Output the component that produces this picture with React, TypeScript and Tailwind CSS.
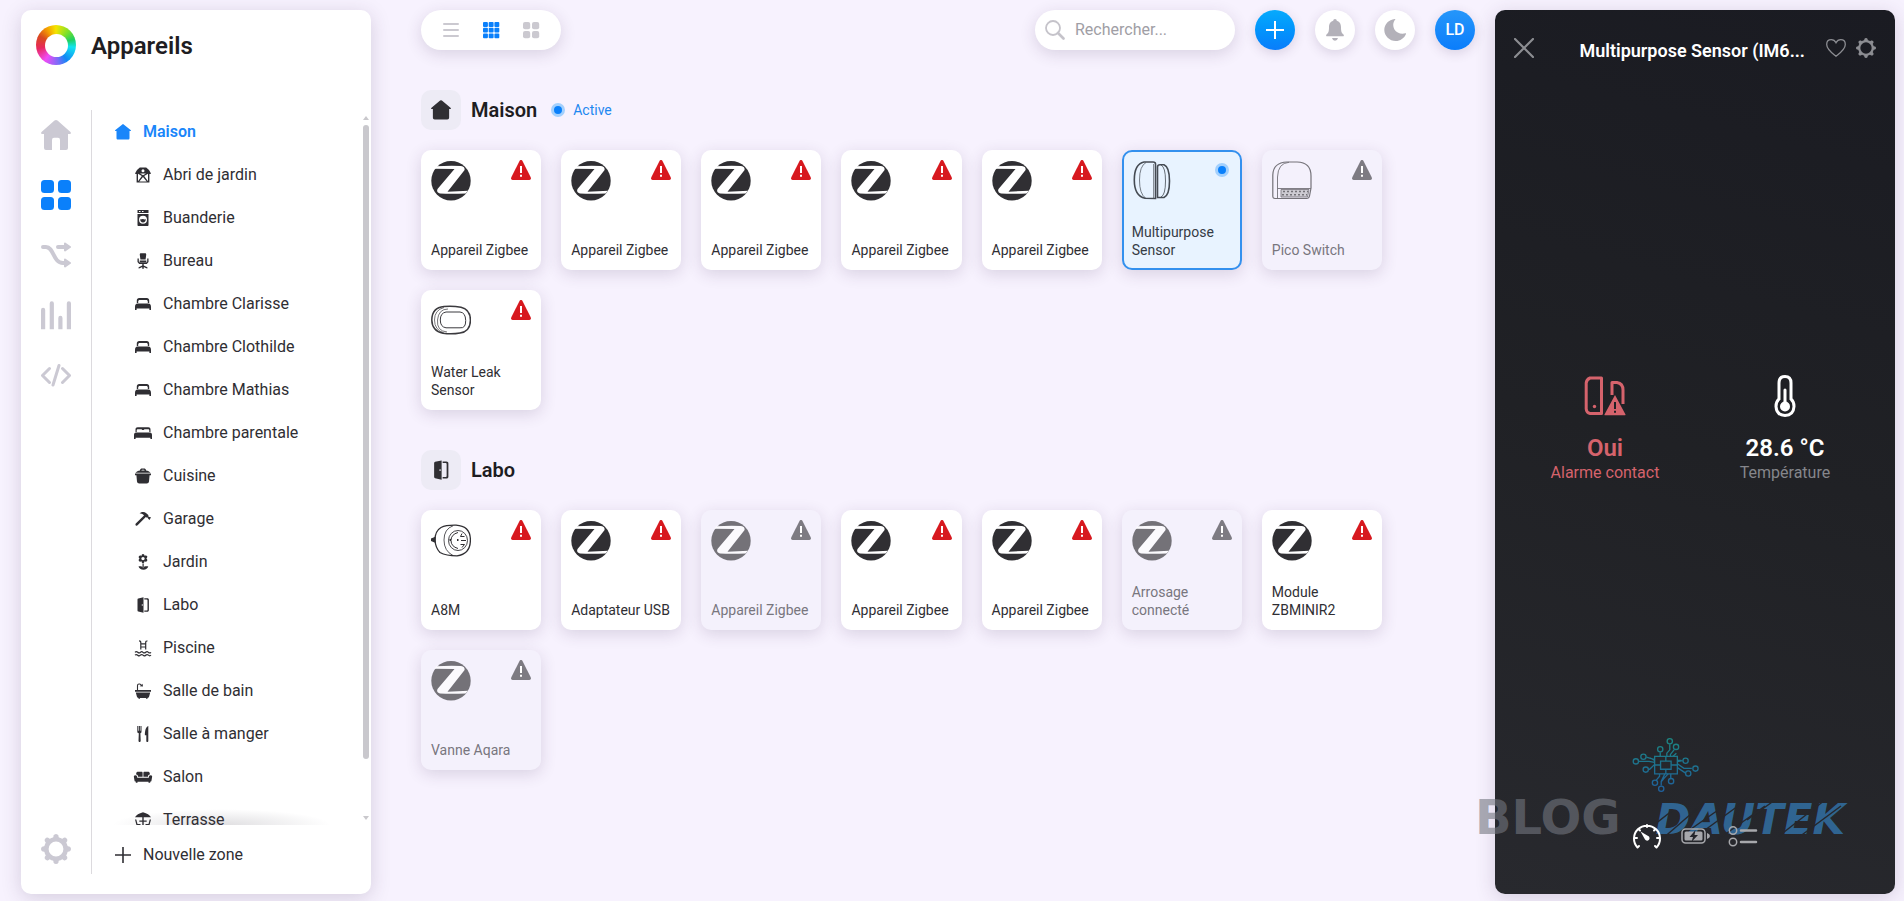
import { useState } from 'react';
import type { ReactNode } from 'react';

type DeviceKind = 'zigbee' | 'contact' | 'pico' | 'leak' | 'plug';

interface Device {
  id: string;
  name: string;
  kind: DeviceKind;
  disabled?: boolean;
  active?: boolean;
}

interface Zone {
  name: string;
  icon: ReactNode;
}

/* ---------- Zone icons (16 x 16) ---------- */

function Glyph({ children, className = 'size-4' }: { children: ReactNode; className?: string }) {
  return (
    <svg viewBox="0 0 16 16" className={`${className} shrink-0 overflow-visible`} fill="currentColor" aria-hidden="true">
      {children}
    </svg>
  );
}

const housePath = 'M7.3.4a1.1 1.1 0 0 1 1.4 0l6.9 5.7c.6.5.4 1-.3 1h-.8V14c0 1-.5 1.6-1.5 1.6H3c-1 0-1.500-.6-1.500-1.600V7.100H.7c-.7 0-.9-.5-.3-1z';
const doorPath = 'M8.500.3v15.400L3.300 14.600c-.5-.1-.8-.5-.8-1V2.400c0-.5.300-.9.8-1zM6.800 7.300v1.500h.9V7.300zM9.300 1.200h3c1 0 1.600.6 1.600 1.500v10.600c0 .9-.6 1.500-1.600 1.500h-3v-1.200h2.300c.6 0 .9-.3.9-.9V3.300c0-.6-.3-.9-.9-.9H9.300z';

const barn = (
  <Glyph>
    <path fillRule="evenodd" d="M4.800.5h6.400L14 3l2 3.400-.7.6H14.400V15.500H1.600V7H.7L0 6.400 2 3zM8 2.200a1.500 1.500 0 1 0 0 3 1.500 1.500 0 0 0 0-3zM3 6.800v7.400L6.800 9 3 6.800zm10 0L9.200 9 13 14.200zM5 6.600 8 8.300l3-1.700zM4.300 14.500h7.400L8 10z" />
  </Glyph>
);
const washer = (
  <Glyph>
    <path fillRule="evenodd" d="M2.500 0h11v3h-11zM4 1v1h1.500V1zm3 0v1h1.500V1zm-4.500 3h11v11c0 .6-.4 1-1 1h-9c-.6 0-1-.4-1-1zM8 5.700a4 4 0 1 0 0 8 4 4 0 0 0 0-8zM5.300 9c1 .8 1.800-.4 2.700 0s1.900.7 2.700 0c.3 2-1 3.600-2.700 3.600S5 11 5.300 9z" />
  </Glyph>
);
const chair = (
  <Glyph>
    <path d="M6 .3h4c.9 0 1.300.6 1.200 1.500l-.6 4.700H5.400L4.800 1.800C4.700.9 5.100.3 6 .3zM4.700 7.500h6.600v2H4.700zM2.500 5.500h1.300v3l1 1.300h6.400l1-1.300v-3h1.300V9l-1.700 2H8.700v1.500l3.700 1.700v1.200l-1.200-.2-2.400-1.100v1.600H7.200v-1.600l-2.400 1.100-1.200.2v-1.200l3.700-1.700V11H4.200L2.500 9z" />
  </Glyph>
);
const bed = (
  <Glyph>
    <path d="M1.800 7V4.500C1.800 3 2.700 2 4.200 2h7.600c1.500 0 2.400 1 2.400 2.500V7h-1.400V5.600c0-.9-.6-1.500-1.500-1.500H4.700c-.9 0-1.500.6-1.500 1.500V7zM2.500 7.500h11c1.700 0 2.500 1.500 2.500 3.500v3h-1.600v-1.500H1.600V14H0v-3c0-2 .8-3.500 2.500-3.500z" />
  </Glyph>
);
const doubleBed = (
  <Glyph>
    <path d="M.5 7V4.500C.5 3 1.300 2.200 2.700 2.200h10.600c1.400 0 2.200.8 2.200 2.300V7h-1.200V5.300c0-.7-.5-1.100-1.100-1.100H9.800c-.7 0-1 .3-1 .9H7.200c0-.6-.3-.9-1-.9H2.800c-.6 0-1.100.4-1.100 1.100V7zM1 7.500h14c1.300 0 2 1 2 2.500v4h-1.600v-1.300H.6V14H-1v-4c0-1.500.7-2.500 2-2.500z" />
  </Glyph>
);
const pot = (
  <Glyph>
    <path fillRule="evenodd" d="M5 2.500C5 1 6 .5 7 .5h2c1 0 2 .5 2 2 2 .2 3.500 1 4.500 2.300H.500C1.500 3.500 3 2.700 5 2.500zm1.400-.1h3.200c0-.4-.3-.7-.8-.7H7.200c-.5 0-.8.300-.8.700zM0 5.600h16V7.300h-1.400L14 13.500c-.2 1.300-1 2-2.300 2H4.300c-1.300 0-2.100-.7-2.300-2L1.400 7.300H0z" />
  </Glyph>
);
const hammer = (
  <Glyph>
    <path d="M4.600 2.500C6.500.8 9.300.6 11.300 2.200l2 1.900.2 1.600 1.100.4L16 6.300 14.500 9l-1.500-1.500-.3-1-1.300.1-.6-.6L2.600 14.300c-.5.6-1.300.6-1.800.1s-.5-1.300 0-1.800L9 4.500C8 3.100 6.500 2.500 4.600 2.500z" />
  </Glyph>
);
const flower = (
  <Glyph>
    <path fillRule="evenodd" d="M8 0c1 0 1.500.8 1.400 1.800 1-.6 2.200-.6 2.700.3s0 1.800-.8 2.400c.9.6 1.300 1.500.8 2.400S10.400 8 9.400 7.300C9.500 8.400 9 9.200 8 9.200s-1.500-.8-1.400-1.900C5.600 8 4.400 7.900 3.900 7s-.1-1.800.8-2.400c-.9-.6-1.300-1.500-.8-2.400s1.700-.9 2.700-.3C6.500.8 7 0 8 0zm0 2.900a1.700 1.700 0 1 0 0 3.400 1.700 1.700 0 0 0 0-3.400zM7.500 9.500h1.200V13H7.500zM3.500 12.500c1.900-.4 3.800.1 4.600 1.300.8-1.200 2.700-1.700 5.200-1.300-.6 2-2.400 3.200-4.800 3.200-2.600 0-4.400-1.200-5-3.200z" />
  </Glyph>
);
const door = (
  <Glyph>
    <path fillRule="evenodd" d={doorPath} />
  </Glyph>
);
const pool = (
  <Glyph>
    <path d="M5.800 9.500V2.500Q5.800.8 4 .8M10.700 9.500V2.500Q10.700.8 12.500 1M5.800 3.800h4.900M5.800 7h4.900M0 12.300q1.300-1.300 2.700 0t2.700 0 2.600 0 2.700 0 2.700 0 2.600 0M0 15.200q1.300-1.300 2.700 0t2.700 0 2.600 0 2.700 0 2.700 0 2.600 0" fill="none" stroke="currentColor" strokeWidth="1.200" />
  </Glyph>
);
const bath = (
  <Glyph>
    <path d="M2.500 7V2.500Q2.500 1 4 1h.5Q6 1 6 2.300" fill="none" stroke="currentColor" strokeWidth="1.100" />
    <path d="M4.700 3.200 7.500.7 8 3.500zM0 7h16v1.800H0zM.8 9.600h14.400l-1 3.600c-.3 1-.9 1.500-1.700 1.700v.9H11V15H5v.8H3.500v-.9c-.8-.2-1.400-.7-1.700-1.700z" />
  </Glyph>
);
const cutlery = (
  <Glyph>
    <path d="M2.300 0h1v4.800h.6V0h1v4.800h.6V0h1v5.500c0 1-.4 1.500-1.100 1.800l.3 7.500c0 1.600-2.200 1.600-2.200 0l.300-7.500C2.700 7 2.300 6.500 2.300 5.500zM13.300 0v15c0 1.300-2 1.300-2 0V9.300H9.900C9.800 5 10.700.8 13.300 0z" />
  </Glyph>
);
const sofa = (
  <Glyph>
    <path d="M1.200 5.500V4.500C1.200 3.300 2 2.700 3 2.700h3.500c.8 0 1.100.4 1.100 1.100v4H3c0-1.500-.7-2.200-1.800-2.300zM14.800 5.500V4.500c0-1.200-.8-1.800-1.800-1.800H9.500c-.8 0-1.100.4-1.100 1.100v4H13c0-1.500.7-2.200 1.800-2.300zM.3 6.200c1.200 0 1.900.7 1.900 2v.6h11.600v-.6c0-1.300.7-2 1.900-2S17.300 7 17.100 8l-.6 3.500c-.1.8-.6 1.200-1.300 1.200v1.100h-1.700v-1.100h-11v1.100H.8v-1.100c-.7 0-1.200-.4-1.300-1.200L-1.100 8c-.2-1 .3-1.800 1.400-1.800z" />
  </Glyph>
);
const terrace = (
  <Glyph>
    <path d="M8 .3c4 1 6.800 2.800 8 5H0c1.200-2.200 4-4 8-5zM7.300 5h1.400v3.500h3v1.300h-3V16H7.300V9.800h-3V8.500h3zM0 7.500h1.300L2.500 12h3v4H4.200v-2.700H1.500zM16 7.500h-1.300L13.500 12h-3v4h1.300v-2.700h2.700z" />
  </Glyph>
);

const zones: Zone[] = [
  { name: 'Abri de jardin', icon: barn },
  { name: 'Buanderie', icon: washer },
  { name: 'Bureau', icon: chair },
  { name: 'Chambre Clarisse', icon: bed },
  { name: 'Chambre Clothilde', icon: bed },
  { name: 'Chambre Mathias', icon: bed },
  { name: 'Chambre parentale', icon: doubleBed },
  { name: 'Cuisine', icon: pot },
  { name: 'Garage', icon: hammer },
  { name: 'Jardin', icon: flower },
  { name: 'Labo', icon: door },
  { name: 'Piscine', icon: pool },
  { name: 'Salle de bain', icon: bath },
  { name: 'Salle à manger', icon: cutlery },
  { name: 'Salon', icon: sofa },
  { name: 'Terrasse', icon: terrace },
];

const maisonDevices: Device[] = [
  { id: 'm1', name: 'Appareil Zigbee', kind: 'zigbee' },
  { id: 'm2', name: 'Appareil Zigbee', kind: 'zigbee' },
  { id: 'm3', name: 'Appareil Zigbee', kind: 'zigbee' },
  { id: 'm4', name: 'Appareil Zigbee', kind: 'zigbee' },
  { id: 'm5', name: 'Appareil Zigbee', kind: 'zigbee' },
  { id: 'm6', name: 'Multipurpose Sensor', kind: 'contact', active: true },
  { id: 'm7', name: 'Pico Switch', kind: 'pico', disabled: true },
  { id: 'm8', name: 'Water Leak Sensor', kind: 'leak' },
];

const laboDevices: Device[] = [
  { id: 'l1', name: 'A8M', kind: 'plug' },
  { id: 'l2', name: 'Adaptateur USB', kind: 'zigbee' },
  { id: 'l3', name: 'Appareil Zigbee', kind: 'zigbee', disabled: true },
  { id: 'l4', name: 'Appareil Zigbee', kind: 'zigbee' },
  { id: 'l5', name: 'Appareil Zigbee', kind: 'zigbee' },
  { id: 'l6', name: 'Arrosage connecté', kind: 'zigbee', disabled: true },
  { id: 'l7', name: 'Module ZBMINIR2', kind: 'zigbee' },
  { id: 'l8', name: 'Vanne Aqara', kind: 'zigbee', disabled: true },
];

/* ---------- Shared drawings ---------- */

const toothAngles = [0, 45, 90, 135, 180, 225, 270, 315];

function Gear({ className, thin = false }: { className: string; thin?: boolean }) {
  return (
    <svg viewBox="0 0 30 30" className={className} aria-hidden="true">
      <circle cx="15" cy="15" r={thin ? 10.2 : 9.7} fill="none" stroke="currentColor" strokeWidth={thin ? 3.4 : 4.6} />
      {toothAngles.map(a => (
        <path key={a} d="M12 5 12.600 1.600Q13.200 0 15 0T17.400 1.600L18 5z" fill="currentColor" transform={`rotate(${a} 15 15)`} />
      ))}
    </svg>
  );
}

function Warning({ className }: { className: string }) {
  return (
    <svg viewBox="0 0 20 20" className={className} aria-label="Alerte">
      <path d="M8.500 1Q10-1.200 11.500 1L19.700 17.300Q20.500 19.800 18.400 20H1.600Q-.5 19.800.3 17.300z" fill="currentColor" />
      <path d="M9 6h2v7H9zM9 14.800h2v2H9z" fill="#fff" />
    </svg>
  );
}

function ActiveDot() {
  return <span className="block size-[14px] shrink-0 rounded-full border-[3px] border-[#a3d0fd] bg-[#0a80fb]" />;
}

function DeviceIcon({ kind }: { kind: DeviceKind }) {
  if (kind === 'zigbee') {
    return (
      <svg viewBox="0 0 40 40" className="size-10" aria-hidden="true">
        <circle cx="20" cy="19.700" r="19.700" fill="#302f33" />
        <path d="M3.200 7.800 5 5.300Q18 4.500 30 5 34 5.500 33.600 9L16.500 30.700 37.200 29.800 34.500 32.500Q20 33 9 32.500 5 31.500 6.500 28L23.500 8Q13 7.800 3.200 7.800z" fill="#fff" />
      </svg>
    );
  }
  if (kind === 'contact') {
    return (
      <svg viewBox="0 0 40 40" className="size-10" fill="none" stroke="#454b53" strokeWidth="1.600" aria-hidden="true">
        <path d="M23.500 3V37.500L13 37.200Q2.300 35 2.300 19 2.300 3 12 1H21Q23.500 1 23.500 3z" />
        <path d="M14 1.500Q7.500 5 7.500 19T13.500 37" strokeWidth=".7" />
        <path d="M21.500 3V37" strokeWidth=".6" />
        <path d="M25.500 6Q25.500 3.800 28 3.800H32Q37.500 6 37.500 20T32 36.500H25.500z" />
        <path d="M29 4Q33.500 6 33.500 20T29 36" strokeWidth=".8" />
      </svg>
    );
  }
  if (kind === 'pico') {
    return (
      <svg viewBox="0 0 40 40" className="size-10" fill="none" stroke="#302f33" strokeWidth="1.200" aria-hidden="true">
        <path d="M.800 35V14Q1.200 1.500 15 1H25Q39 1.200 39 15V27L37.500 35Q37 37.500 34.500 37.500H3Q.8 37.500.8 35z" />
        <path d="M5.500 37V16Q6 2 17 1.300M5.500 27.500H39" strokeWidth=".9" />
        <path d="M9 28.500H37L35.500 36H9z" fill="#b9b8bd" strokeWidth=".8" />
        <path d="M11 30.500H36M10 33.700H35" strokeWidth="1.600" strokeDasharray="2 2" />
      </svg>
    );
  }
  if (kind === 'leak') {
    return (
      <svg viewBox="0 0 40 40" className="size-10" fill="none" stroke="#3b3a3e" strokeWidth="1.500" aria-hidden="true">
        <path d="M13 5.500Q22 4.800 30 6.200 39.500 8.500 39.400 19.500T29 32Q21 33.500 12 32.300 1 30 .8 19 1 6.500 13 5.500z" />
        <path d="M13 6.500Q3.500 9 3.500 19T13 32M17 8Q7.500 8 6.500 19T16 31" strokeWidth=".7" />
        <path d="M15 11H29Q34.500 11.500 34.700 19.500T29 26.800H15Q9.300 26 9.300 19T15 11z" strokeWidth="1" />
      </svg>
    );
  }
  return (
    <svg viewBox="0 0 40 40" className="size-10" fill="none" stroke="#302f33" strokeWidth="1.300" aria-hidden="true">
      <path d="M25 4.200Q39.400 5 39.400 19T26 34.800Q15 34.800 9 31.500 4.500 27 4 19 4 10 10 6.500 15 4 25 4.200z" />
      <path d="M4 16.500.5 18V19.500L4 21z" fill="#302f33" />
      <path d="M22 4.800Q13 8 13 19T22 34.500" strokeWidth=".8" />
      <ellipse cx="27" cy="19.500" rx="9.500" ry="10" strokeWidth=".9" />
      <path d="M27 11.500Q20 13.500 20 19.500T27 27.500M31 12.500 29.500 15.500H33.500M30 19.500H35M29.500 23.500H33.500L31 26.500" strokeWidth="1" />
      <path d="M18.500 19h1.500M26 19h1.500" strokeWidth="1.800" />
    </svg>
  );
}

function DeviceCard({ device }: { device: Device }) {
  const look = device.active
    ? 'border-2 border-[#3390ee] bg-[#e8f3ff] px-2 pt-[9px] pb-[9px] text-[#353b45]'
    : device.disabled
      ? 'bg-[#f4f1fc] px-[10px] py-[11px] text-[#78767e]'
      : 'bg-white px-[10px] py-[11px] text-[#2f2e33]';
  return (
    <button
      type="button"
      className={`flex h-[120px] flex-col justify-between rounded-[10px] text-left shadow-[0_4px_16px_rgba(60,40,80,0.16)] ${look}`}
    >
      <span className="flex w-full items-start justify-between">
        <span className={device.disabled ? 'opacity-65' : ''}>
          <DeviceIcon kind={device.kind} />
        </span>
        {device.active ? (
          <span className="mt-[2px] mr-[3px]">
            <ActiveDot />
          </span>
        ) : (
          <Warning className={`-mt-px size-5 ${device.disabled ? 'text-[#7d7b82]' : 'text-[#d7191f]'}`} />
        )}
      </span>
      <span className="text-sm leading-[18px]">{device.name}</span>
    </button>
  );
}

function ZoneSection({ title, icon, active, devices }: { title: string; icon: string; active?: boolean; devices: Device[] }) {
  return (
    <section className="mt-10">
      <div className="flex h-10 items-center">
        <span className="flex size-10 items-center justify-center rounded-[10px] bg-[#edebf5] text-[#302f33]">
          <Glyph className="size-5">
            <path fillRule="evenodd" d={icon} />
          </Glyph>
        </span>
        <h2 className="ml-[10px] text-xl font-semibold text-[#1e1d22]">{title}</h2>
        {active && (
          <span className="ml-[14px] flex items-center gap-2 text-sm text-[#1e88f0]">
            <ActiveDot />
            Active
          </span>
        )}
      </div>
      <div className="mt-5 grid grid-cols-[repeat(auto-fill,minmax(120px,1fr))] gap-5 pr-[93px]">
        {devices.map(d => (
          <DeviceCard key={d.id} device={d} />
        ))}
      </div>
    </section>
  );
}

/* ---------- Sidebar ---------- */

function Sidebar() {
  return (
    <aside className="flex w-[350px] shrink-0 flex-col rounded-[10px] bg-white pb-5 shadow-[0_4px_20px_rgba(60,40,80,0.18)]">
      <div className="flex h-[100px] shrink-0 items-start gap-[15px] pt-[15px] pl-[15px]">
        <span className="flex size-10 items-center justify-center rounded-full bg-[conic-gradient(#f5e400,#7be02a_12%,#20d060_20%,#12e4f0_27%,#1288f5_40%,#7a6cf8_48%,#f04cf5_60%,#e8285c_72%,#d84a1e_83%,#f5a000_92%,#f5e400)]">
          <span className="size-[23px] rounded-full bg-white" />
        </span>
        <h1 className="text-2xl leading-[42px] font-semibold text-[#1e1d22]">Appareils</h1>
      </div>

      <div className="flex min-h-0 flex-1">
        <nav className="flex w-[71px] shrink-0 flex-col gap-[30px] border-r border-[#dcdade] py-[10px] pl-5 text-[#cbc9d3]">
          <a href="#accueil" aria-label="Accueil">
            <svg viewBox="0 0 30 30" className="size-[30px]" fill="currentColor">
              <path d="M13.500.6Q15-.5 16.500.6L29.500 12Q30.800 14 28.500 14H27V28Q27 30 25 30H19V20Q19 17.700 17 17.700H13Q11 17.700 11 20V30H5Q3 30 3 28V14H1.500Q-.8 14 .5 12z" />
            </svg>
          </a>
          <a href="#appareils" aria-label="Appareils" className="text-[#0a80fb]">
            <svg viewBox="0 0 30 30" className="size-[30px]" fill="currentColor">
              <rect width="13" height="13" rx="3.500" />
              <rect x="17" width="13" height="13" rx="3.500" />
              <rect y="17" width="13" height="13" rx="3.500" />
              <rect x="17" y="17" width="13" height="13" rx="3.500" />
            </svg>
          </a>
          <a href="#scenarios" aria-label="Scénarios">
            <svg viewBox="0 0 30 30" className="size-[30px]" fill="none" stroke="currentColor" strokeWidth="4" strokeLinecap="round">
              <path d="M2 7H5C13 7 12 23 22 23H24M17 7H24" />
              <path d="M24 3.500 29 7 24 10.500zM24 19.500 29 23 24 26.500z" fill="currentColor" strokeWidth="2" strokeLinejoin="round" />
            </svg>
          </a>
          <a href="#historique" aria-label="Historique">
            <svg viewBox="0 0 30 30" className="size-[30px]" fill="currentColor">
              <path d="M0 10Q0 7.700 2.100 7.700T4.200 10V29.300H0zM8.700 3.500Q8.700 1.300 10.800 1.300T12.900 3.500V29.300H8.700zM17.300 18Q17.300 15.700 19.400 15.700T21.500 18V29.300H17.300zM25.800 3.500Q25.800 1.300 27.900 1.300T30 3.500V29.300H25.800z" />
            </svg>
          </a>
          <a href="#code" aria-label="Code">
            <svg viewBox="0 0 30 30" className="size-[30px]" fill="none" stroke="currentColor" strokeWidth="3" strokeLinecap="round" strokeLinejoin="round">
              <path d="M8.500 8.500 1.500 15.500 8.500 22.500M21.500 8.500 28.500 15.500 21.500 22.500M18 5.500 12 25" />
            </svg>
          </a>
          <a href="#reglages" aria-label="Réglages" className="mt-auto">
            <Gear className="size-[30px]" />
          </a>
        </nav>

        <div className="flex min-w-0 flex-1 flex-col">
          <div className="relative min-h-0 flex-1 overflow-hidden">
            <ul className="text-base text-[#2f2e33]">
              <li>
                <a href="#maison" className="flex h-[43px] items-center gap-3 pl-[23px] font-semibold text-[#1a86fa]">
                  <Glyph>
                    <path d={housePath} />
                  </Glyph>
                  Maison
                </a>
              </li>
              {zones.map(zone => (
                <li key={zone.name}>
                  <a href="#zone" className="flex h-[43px] items-center gap-3 pl-[43px]">
                    {zone.icon}
                    {zone.name}
                  </a>
                </li>
              ))}
            </ul>
            {/* Fade at the bottom of the list */}
            <span className="absolute bottom-0 left-5 h-4 w-[220px] bg-[radial-gradient(ellipse_at_bottom,rgba(60,55,70,0.16),transparent_70%)]" />
            {/* Scroll track */}
            <span className="absolute top-[6px] right-[2px] bottom-[5px] flex w-[6px] flex-col items-center">
              <span className="h-0 border-x-[3px] border-b-4 border-x-transparent border-b-[#c9c8cc]" />
              <span className="mt-[5px] mb-auto h-[90%] w-[6px] rounded-full bg-[#c9c8cd]" />
              <span className="h-0 border-x-[3px] border-t-4 border-x-transparent border-t-[#c9c8cc]" />
            </span>
          </div>
          <button type="button" className="mt-[10px] flex h-[39px] shrink-0 items-center gap-3 pl-[23px] text-base text-[#2f2e33]">
            <Glyph>
              <path d="M7.200 0h1.600v7.200H16v1.600H8.800V16H7.200V8.800H0V7.200h7.200z" />
            </Glyph>
            Nouvelle zone
          </button>
        </div>
      </div>
    </aside>
  );
}

/* ---------- Top bar ---------- */

function TopBar() {
  const [query, setQuery] = useState('');
  return (
    <header className="flex h-10 items-center gap-5">
      <div className="mr-auto flex h-10 items-center gap-6 rounded-full bg-white px-[22px] text-[#cbc9d0] shadow-[0_4px_16px_rgba(60,40,80,0.16)]">
        <button type="button" aria-label="Liste">
          <Glyph>
            <path d="M1 1h14q1 0 1 1t-1 1H1Q0 3 0 2t1-1zM1 7h14q1 0 1 1t-1 1H1Q0 9 0 8t1-1zM1 13h14q1 0 1 1t-1 1H1q-1 0-1-1t1-1z" />
          </Glyph>
        </button>
        <button type="button" aria-label="Petite grille" className="text-[#0a80fb]">
          <Glyph>
            {[0, 5.7, 11.4].map(y => [0, 5.7, 11.4].map(x => <rect key={`${x}-${y}`} x={x} y={y} width="4.900" height="4.900" rx="1" />))}
          </Glyph>
        </button>
        <button type="button" aria-label="Grande grille">
          <Glyph>
            {[0, 9].map(y => [0, 9].map(x => <rect key={`${x}-${y}`} x={x} y={y} width="7.200" height="7.200" rx="2" />))}
          </Glyph>
        </button>
      </div>

      <label className="flex h-10 w-[200px] items-center gap-[10px] rounded-full bg-white pr-4 pl-[10px] shadow-[0_4px_16px_rgba(60,40,80,0.16)]">
        <svg viewBox="0 0 20 20" className="size-5 shrink-0" fill="none" stroke="#c5c3ca" strokeWidth="1.800" strokeLinecap="round" aria-hidden="true">
          <circle cx="8" cy="8" r="7" />
          <path d="M13 13 18.500 18.500" strokeWidth="2.600" />
        </svg>
        <input
          type="text"
          aria-label="Rechercher"
          value={query}
          onChange={e => setQuery(e.target.value)}
          placeholder="Rechercher..."
          className="min-w-0 flex-1 bg-transparent text-base outline-none placeholder:text-[#a09ea5]"
        />
      </label>

      <button type="button" aria-label="Ajouter" className="flex size-10 items-center justify-center rounded-full bg-linear-to-b from-[#08aafc] to-[#0a7dfb] text-white shadow-[0_3px_12px_rgba(60,40,80,0.16)]">
        <svg viewBox="0 0 20 20" className="size-5" stroke="currentColor" strokeWidth="2">
          <path d="M10 1V19M1 10H19" />
        </svg>
      </button>
      <button type="button" aria-label="Notifications" className="flex size-10 items-center justify-center rounded-full bg-white text-[#b3b1b9] shadow-[0_3px_12px_rgba(60,40,80,0.16)]">
        <svg viewBox="0 0 20 22" className="h-[22px] w-5" fill="currentColor">
          <path d="M10 0Q11.800 0 11.800 1.800C15 2.700 16 5.500 16 8.500 16 13 17 14.500 18.500 15.500 19.300 16.500 18.800 17.300 18 17.300H2C1.200 17.300.7 16.500 1.500 15.500 3 14.500 4 13 4 8.500 4 5.500 5 2.700 8.200 1.800Q8.200 0 10 0zM7 19H13Q12.300 21.800 10 21.800T7 19z" />
        </svg>
      </button>
      <button type="button" aria-label="Mode sombre" className="flex size-10 items-center justify-center rounded-full bg-white text-[#b3b1b9] shadow-[0_3px_12px_rgba(60,40,80,0.16)]">
        <svg viewBox="0 0 22 22" className="size-[22px]" fill="currentColor">
          <path d="M11.500 0C9 3 8.500 7 10.300 10.200 12.500 13.900 17 15.500 21.500 14.300 22 14.200 22.200 14.500 22 15 20.200 19.300 16.300 22 11.700 22 5.500 22 .300 17 .300 11 .300 5.300 4.800.7 10.700 0 11.300-.1 11.800-.3 11.500 0z" />
        </svg>
      </button>
      <button type="button" className="size-10 rounded-full bg-linear-to-b from-[#2596fa] to-[#0a7dfb] text-base font-medium text-white shadow-[0_3px_12px_rgba(60,40,80,0.16)]">
        LD
      </button>
    </header>
  );
}

/* ---------- Device details ---------- */

function Watermark() {
  return (
    <div className="pointer-events-none absolute bottom-[50px] -left-5 w-[370px] select-none" aria-hidden="true">
      <svg viewBox="0 0 200 164" className="absolute bottom-[52px] left-[157px] h-[54px] w-[67px]" fill="none" strokeWidth="4">
        <defs>
          <linearGradient id="chip" x1="0" y1="0" x2="0" y2="164" gradientUnits="userSpaceOnUse">
            <stop offset="0" stopColor="#1c8580" />
            <stop offset="1" stopColor="#1f5f9d" />
          </linearGradient>
        </defs>
        <g stroke="url(#chip)">
          <path d="M67 56H136V109H67zM85 70H117V95H85zM101 56V70M101 95V109M67 82H85M117 82H136" />
          <path d="M84 56V43M104 56V46L113 36V19M115 56V50L126 36M122 56 133 46M136 72 152 69M136 78 156 92H180M136 90 160 106M136 68H148M67 66 42 58M67 74 50 71H19M67 80 52 95H48M67 68 52 60M82 109V116L72 128M98 109 87 132V144M108 109 96 122 88 132M116 109V123" />
          <circle cx="84" cy="34" r="8" />
          <circle cx="113" cy="10" r="8" />
          <circle cx="132" cy="27" r="8" />
          <circle cx="161" cy="69" r="8" />
          <circle cx="191" cy="93" r="8" />
          <circle cx="169" cy="108" r="8" />
          <circle cx="33" cy="57" r="8" />
          <circle cx="10" cy="71" r="8" />
          <circle cx="40" cy="96" r="8" />
          <circle cx="68" cy="136" r="8" />
          <circle cx="87" cy="154" r="8" />
          <circle cx="117" cy="131" r="8" />
        </g>
      </svg>
      <div className="flex items-baseline justify-between font-['DejaVu_Sans',sans-serif] leading-[48px] font-bold">
        <span className="text-[48px] text-[#737780]/60">BLOG</span>
        <span className="text-[42px] text-[#378fd7]/60 italic">DAUTEK</span>
      </div>
      <svg viewBox="0 0 200 48" className="absolute right-0 bottom-0 h-12 w-[200px]" stroke="#26272c" strokeWidth="1.500" aria-hidden="true">
        <path d="M0 36 28 14M16 44 62 4M36 40 76 12M60 34 104 2M72 44 120 10M102 24 130 4M134 40 180 4M150 44 196 10" />
      </svg>
    </div>
  );
}

function DetailPanel() {
  return (
    <aside className="relative flex w-[400px] shrink-0 flex-col rounded-[10px] bg-[linear-gradient(15deg,#28292e,#202125_50%,#1a1b22)] text-white shadow-[0_4px_20px_rgba(60,40,80,0.18)]">
      <div className="flex items-start gap-[10px] px-[19px] pt-7">
        <button type="button" aria-label="Fermer" className="text-[#8c8d92]">
          <svg viewBox="0 0 20 20" className="size-5" stroke="currentColor" strokeWidth="2.200" strokeLinecap="round">
            <path d="M1 1 19 19M19 1 1 19" />
          </svg>
        </button>
        <h2 className="min-w-0 flex-1 pr-[11px] text-right text-lg leading-[26px] font-semibold whitespace-nowrap">Multipurpose Sensor (IM6...</h2>
        <button type="button" aria-label="Favori" className="text-[#8c8d92]">
          <svg viewBox="0 0 20 20" className="size-5" fill="none" stroke="currentColor" strokeWidth="1.300">
            <path d="M10 18.300C7 15.800.7 11.500.7 6.500.7 3.600 2.700 1.700 5.300 1.700 7.500 1.700 9 2.900 10 4.800 11 2.900 12.500 1.700 14.700 1.700 17.300 1.700 19.300 3.600 19.300 6.500 19.300 11.500 13 15.800 10 18.300z" />
          </svg>
        </button>
        <button type="button" aria-label="Paramètres" className="text-[#8c8d92]">
          <Gear className="size-5" thin />
        </button>
      </div>

      <div className="grid flex-1 grid-cols-2 content-center px-5 pb-7 text-center">
        <div className="flex flex-col items-center text-[#d5636c]">
          <svg viewBox="0 0 42 42" className="size-[42px]" fill="none" stroke="currentColor" strokeWidth="3" strokeLinejoin="round" aria-hidden="true">
            <path d="M6 3H17.500V38.500H6Q2.500 38 2.200 34V8Q2.500 4.500 6 3z" />
            <path d="M28 20V7.500H33Q39 8.500 39 15V29" />
            <circle cx="10.500" cy="31.500" r="1.700" fill="currentColor" stroke="none" />
            <path d="M31 20 41.500 39.500Q41.800 40.300 41 40.300H20.800Q20 40.300 20.500 39.500z" fill="currentColor" stroke="none" />
            <path d="M30 27h2v7h-2zM30 35.800h2v2h-2z" fill="#202125" stroke="none" />
          </svg>
          <strong className="mt-4 text-2xl leading-[30px] font-semibold">Oui</strong>
          <span className="text-base leading-5">Alarme contact</span>
        </div>
        <div className="flex flex-col items-center">
          <svg viewBox="0 0 42 42" className="size-[42px]" fill="none" stroke="currentColor" strokeWidth="3" aria-hidden="true">
            <path d="M15 24V8Q15 1.500 21 1.500T27 8V24Q30 26.500 30 31.500 29.500 40.300 21 40.500 12.500 40.300 12 31.500 12 26.500 15 24z" />
            <circle cx="21" cy="31.500" r="5" fill="currentColor" stroke="none" />
            <path d="M21 15V31" strokeLinecap="round" />
          </svg>
          <strong className="mt-4 text-2xl leading-[30px] font-semibold">28.6 °C</strong>
          <span className="text-base leading-5 text-[#85868b]">Température</span>
        </div>
      </div>

      <Watermark />

      <div className="relative flex justify-center gap-[18px] pb-[43px]">
        <button type="button" aria-label="Mesures">
          <svg viewBox="0 0 30 30" className="size-[30px]" fill="none" stroke="currentColor" strokeWidth="2" strokeLinecap="round">
            <path d="M5.500 26.500A13 13 0 1 1 24.500 26.500M15 4V6M6.500 8 8 9.500M23.500 8 22 9.500M3 17H5M27 17H25M5.500 26.500 7 25M24.500 26.500 23 25" />
            <path d="M8.500 10.500 17 15.500Q18.500 18 16 19.500 14 20 13 18.500z" fill="currentColor" stroke="none" />
          </svg>
        </button>
        <button type="button" aria-label="Batterie" className="text-[#a7a8ac]">
          <svg viewBox="0 0 30 30" className="size-[30px]" fill="none" stroke="currentColor" strokeWidth="1.500">
            <rect x="2" y="8" width="23" height="14" rx="3.500" />
            <rect x="4.500" y="10.500" width="18" height="9" rx="1.500" fill="currentColor" stroke="none" />
            <path d="M27 12Q30 13 30 15T27 18z" fill="currentColor" stroke="none" />
            <path d="M15.500 9 9.500 16H13L11.500 21 18 14H14.500z" fill="#25262b" stroke="none" />
          </svg>
        </button>
        <button type="button" aria-label="Options" className="text-[#a7a8ac]">
          <svg viewBox="0 0 30 30" className="size-[30px]" fill="none" stroke="currentColor" strokeWidth="1.500">
            <circle cx="5" cy="9.500" r="3.700" />
            <circle cx="5" cy="21" r="3.700" />
            <path d="M13 9.500H28M13 21H28" strokeWidth="2.500" strokeLinecap="round" />
          </svg>
        </button>
      </div>
    </aside>
  );
}

export default function App() {
  return (
    <div className="flex h-screen overflow-hidden bg-[#f7f2fe] pt-[10px] pr-[9px] pb-[7px] pl-[21px] font-[Roboto,sans-serif]">
      <Sidebar />
      <main className="min-w-0 flex-1 pr-5 pl-[50px]">
        <TopBar />
        <ZoneSection title="Maison" icon={housePath} active devices={maisonDevices} />
        <ZoneSection title="Labo" icon={doorPath} devices={laboDevices} />
      </main>
      <DetailPanel />
    </div>
  );
}
